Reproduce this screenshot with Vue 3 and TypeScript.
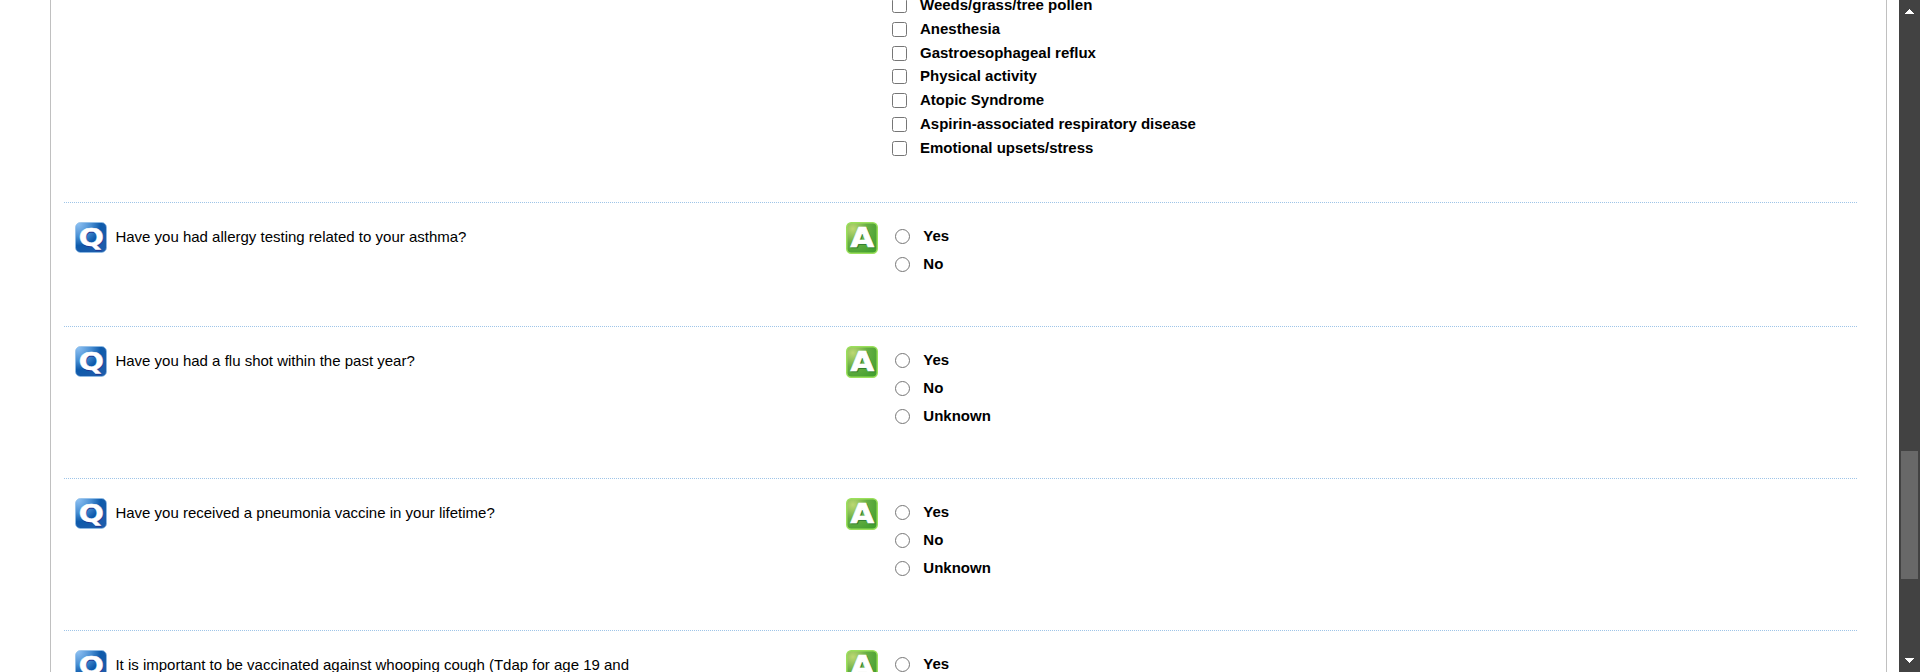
<script setup lang="ts">
interface Question {
  text: string
  options: string[]
}

const triggers: string[] = [
  'Weeds/grass/tree pollen',
  'Anesthesia',
  'Gastroesophageal reflux',
  'Physical activity',
  'Atopic Syndrome',
  'Aspirin-associated respiratory disease',
  'Emotional upsets/stress',
]

const questions: Question[] = [
  { text: 'Have you had allergy testing related to your asthma?', options: ['Yes', 'No'] },
  { text: 'Have you had a flu shot within the past year?', options: ['Yes', 'No', 'Unknown'] },
  { text: 'Have you received a pneumonia vaccine in your lifetime?', options: ['Yes', 'No', 'Unknown'] },
  { text: 'It is important to be vaccinated against whooping cough (Tdap for age 19 and', options: ['Yes'] },
]
</script>

<template>
  <div class="page">
    <svg class="defs" width="0" height="0" aria-hidden="true">
      <defs>
        <radialGradient id="qFill" cx="0.08" cy="0.04" r="1.05">
          <stop offset="0" stop-color="#8cc0f2" />
          <stop offset="0.4" stop-color="#4a8fd3" />
          <stop offset="0.7" stop-color="#0d5aab" />
          <stop offset="1" stop-color="#1c5cab" />
        </radialGradient>
        <radialGradient id="aFill" cx="0.2" cy="0.2" r="0.95">
          <stop offset="0" stop-color="#bcd873" />
          <stop offset="0.5" stop-color="#67ae43" />
          <stop offset="1" stop-color="#43a02f" />
        </radialGradient>
      </defs>
    </svg>
    <main class="sheet">
      <section class="triggers">
        <label v-for="t in triggers" :key="t" class="check">
          <input type="checkbox" />
          <span>{{ t }}</span>
        </label>
      </section>
      <section v-for="(q, i) in questions" :key="i" class="row">
        <div class="question">
          <svg class="icon" viewBox="0 0 32 32">
            <rect x="0.5" y="0.5" width="31" height="30" rx="5" fill="url(#qFill)" stroke="#8fbde8" stroke-opacity="0.7" />
            <g transform="translate(16.3 24.4) scale(1.18 1)">
              <text class="q shade" x="0.5" y="0.7">Q</text>
              <text class="q">Q</text>
            </g>
          </svg>
          <p>{{ q.text }}</p>
        </div>
        <div class="answer">
          <svg class="icon" viewBox="0 0 32 32">
            <rect x="0.75" y="0.75" width="30.5" height="30.5" rx="4.5" fill="url(#aFill)" stroke="#9be05c" stroke-width="1.5" />
            <g transform="translate(16.3 24.6) scale(1.17 1)">
              <text class="a shade" x="0.8" y="0.9">A</text>
              <text class="a">A</text>
            </g>
          </svg>
          <div class="options">
            <label v-for="o in q.options" :key="o" class="radio">
              <input type="radio" :name="'q' + i" />
              <span>{{ o }}</span>
            </label>
          </div>
        </div>
      </section>
    </main>
    <aside class="scrollbar">
      <svg width="9" height="5" viewBox="0 0 9 5" shape-rendering="crispEdges"><path d="M4 0h1v1h1v1h1v1h1v1h1v1H0V4h1V3h1V2h1V1h1z" fill="#fff" /></svg>
      <div class="thumb"></div>
      <svg width="9" height="5" viewBox="0 0 9 5" shape-rendering="crispEdges"><path d="M0 0h9v1H8v1H7v1H6v1H5v1H4V4H3V3H2V2H1V1H0z" fill="#fff" /></svg>
    </aside>
  </div>
</template>

<style>
html,
body {
  margin: 0;
  overflow: hidden;
  background: #fff;
}
</style>

<style scoped>
.page {
  display: flex;
  box-sizing: border-box;
  width: 1920px;
  height: 672px;
  overflow: hidden;
  padding-left: 50px;
  background: #fff;
  color: #000;
  font: 15px/17px 'Liberation Sans', Arial, sans-serif;
}
.defs {
  position: absolute;
}
.sheet {
  box-sizing: border-box;
  width: 1837px;
  height: 672px;
  overflow: hidden;
  padding: 0 29px 0 13px;
  border: solid #c0c0c0;
  border-width: 0 1px;
}
input {
  flex: none;
  width: 15px;
  height: 15px;
  margin: 0;
}
.triggers {
  display: flow-root;
  box-sizing: border-box;
  height: 202px;
  padding-left: 828px;
}
.check {
  display: flex;
  height: 23.83px;
  font-weight: bold;
}
.check:first-child {
  margin-top: -4px;
}
.check input {
  margin-top: 2px;
}
.check span {
  margin-left: 13px;
}
.row {
  display: flex;
  box-sizing: border-box;
  height: 152px;
  border-top: 1px dotted #9fc5e8;
  padding-top: 19px;
}
.row:nth-child(2) {
  height: 124px;
}
.question {
  display: flex;
  box-sizing: border-box;
  width: 782px;
  padding-left: 11px;
}
.question p {
  margin: 6px 0 0 8.4px;
}
.icon {
  flex: none;
  width: 32px;
  height: 32px;
}
.icon text {
  fill: #fff;
  stroke: #fff;
  text-anchor: middle;
  font-family: 'DejaVu Sans', Verdana, sans-serif;
  font-weight: bold;
}
.icon .q {
  font-size: 25.5px;
  stroke-width: 0.3px;
}
.icon .a {
  font-size: 26px;
  stroke-width: 0.7px;
}
.icon .q.shade {
  fill: #24348f;
  stroke: #24348f;
}
.icon .a.shade {
  fill: #347f32;
  stroke: #347f32;
}
.answer {
  display: flex;
}
.options {
  padding: 5px 0 0 17px;
}
.radio {
  display: flex;
  height: 28px;
  font-weight: bold;
}
.radio input {
  margin-top: 2px;
}
.radio span {
  margin-left: 13.3px;
}
.scrollbar {
  display: flex;
  box-sizing: border-box;
  flex-direction: column;
  align-items: center;
  width: 21px;
  height: 672px;
  margin-left: 12px;
  padding: 9px 2px;
  background: #424242;
}
.thumb {
  width: 17px;
  height: 128px;
  margin: 437px 0 79px;
  background: #686868;
}
</style>
